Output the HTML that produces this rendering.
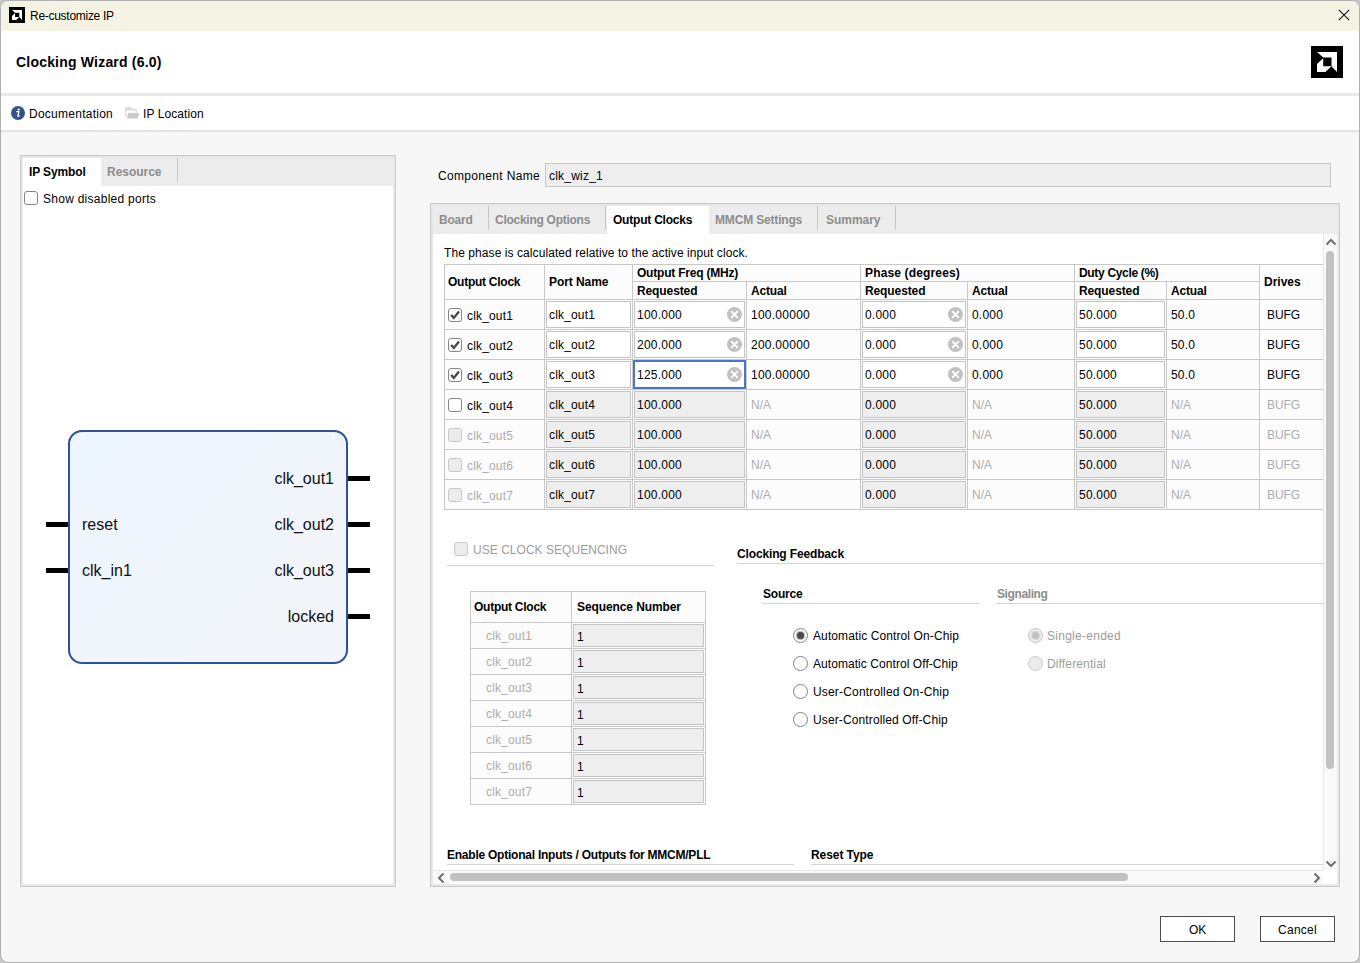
<!DOCTYPE html><html><head><meta charset="utf-8"><title>Re-customize IP</title><style>
*{box-sizing:border-box;margin:0;padding:0}
html,body{width:1360px;height:963px;overflow:hidden;background:#c8c8c8;font-family:"Liberation Sans",sans-serif;font-size:12px;color:#000}
.abs{position:absolute}
.t{position:absolute;white-space:nowrap;line-height:14px;height:14px;letter-spacing:0.2px}
.b{font-weight:bold}
.g{color:#adadad}
.dg{color:#8c8c8c}
.lg{color:#9c9c9c}
.ln{position:absolute;background:#c9c9c9}
.inp{position:absolute;border:1px solid #c4c4c4;background:#fff}
.inp.dis{background:#eeeeee}
.cb{position:absolute;width:14px;height:14px;border:1px solid #868686;border-radius:3px;background:#fff}
.cb.dis{border-color:#c9c9c9;background:#ececec}
.rd{position:absolute;width:15px;height:15px;border:1.3px solid #838383;border-radius:50%;background:#fff}
.rd.dis{border-color:#c8c8c8;background:#ececec}
</style></head><body>
<div class="abs" style="left:0px;top:0px;width:1360px;height:963px;background:#f7f7f7;border:1px solid #b0b0b0;border-radius:8px;overflow:hidden"></div>
<div class="abs" style="left:1px;top:1px;width:1358px;height:30px;background:#f5f4e4;border-radius:7px 7px 0 0"></div>
<svg class="abs" style="left:9px;top:7px" width="16" height="16" viewBox="0 0 32 32"><rect width="32" height="32" fill="#000"/><polygon points="6,6 26,6 26,26 20.5,20.2 20.5,11.5 12.2,11.5" fill="#fff"/><polygon points="6,18 12.2,12.2 12.2,20.2 20.5,20.2 14.4,26 6,26" fill="#fff"/></svg>
<div class="t " style="left:30px;top:9px;letter-spacing:-0.28px">Re-customize IP</div>
<svg class="abs" style="left:1338px;top:9px" width="12" height="12" viewBox="0 0 12 12"><path d="M0.8,0.8 L11.2,11.2 M11.2,0.8 L0.8,11.2" stroke="#111" stroke-width="1.1" fill="none"/></svg>
<div class="abs" style="left:1px;top:31px;width:1358px;height:62px;background:#fff"></div>
<div class="t b" style="left:16px;top:54px;font-size:14px;line-height:16px;height:16px;letter-spacing:0.2px">Clocking Wizard (6.0)</div>
<svg class="abs" style="left:1311px;top:46px" width="32" height="32" viewBox="0 0 32 32"><rect width="32" height="32" fill="#000"/><polygon points="6,6 26,6 26,26 20.5,20.2 20.5,11.5 12.2,11.5" fill="#fff"/><polygon points="6,18 12.2,12.2 12.2,20.2 20.5,20.2 14.4,26 6,26" fill="#fff"/></svg>
<div class="abs" style="left:1px;top:93px;width:1358px;height:3px;background:#e8e8e8"></div>
<div class="abs" style="left:1px;top:96px;width:1358px;height:34px;background:#fff"></div>
<div class="abs" style="left:1px;top:130px;width:1358px;height:2px;background:#e3e3e3"></div>
<svg class="abs" style="left:11px;top:106px" width="14" height="14" viewBox="0 0 14 14"><circle cx="7" cy="7" r="7" fill="#35528c"/><circle cx="7.7" cy="3.5" r="1.05" fill="#fff"/><path d="M5.9,5.7 L7.9,5.4 L6.9,10.1 Q6.9,10.7 8.1,10.0" stroke="#fff" stroke-width="1.35" fill="none" stroke-linejoin="round" stroke-linecap="round"/></svg>
<div class="t " style="left:29px;top:107px;letter-spacing:0.253px;">Documentation</div>
<svg class="abs" style="left:125px;top:106px" width="15" height="14" viewBox="0 0 15 14"><path d="M0.2,1.6 Q0.2,1 0.8,1 H6.2 Q6.8,1 6.8,1.6 V2.8 H11.2 Q11.8,2.8 11.8,3.4 V7 H10.7 V4.6 H1.5 V10.2 L0.2,11.6 Z" fill="#dcdcdc"/><path d="M3.5,7 H13.9 Q14.2,7 14.1,7.4 L13,12.3 Q12.9,12.6 12.5,12.6 H2.1 Q1.8,12.6 1.9,12.2 L3.1,7.4 Q3.2,7 3.5,7 Z" fill="#cbcbcb"/></svg>
<div class="t " style="left:143px;top:107px;letter-spacing:0.087px;">IP Location</div>
<div class="abs" style="left:20px;top:155px;width:376px;height:732px;background:#fff;border:1px solid #c9c9c9"></div>
<div class="abs" style="left:21px;top:156px;width:374px;height:730px;border:2px solid #e8e8e8"></div>
<div class="abs" style="left:23px;top:158px;width:370px;height:28px;background:#ececec"></div>
<div class="abs" style="left:23px;top:158px;width:78px;height:28px;background:#fff"></div>
<div class="t b" style="left:29px;top:165px;letter-spacing:-0.113px;">IP Symbol</div>
<div class="t b dg" style="left:107px;top:165px;letter-spacing:-0.031px;">Resource</div>
<div class="ln" style="left:177px;top:158px;width:1px;height:24px;background:#c6c6c6;"></div>
<div class="cb" style="left:24px;top:191px;border-color:#858585"></div>
<div class="t " style="left:43px;top:192px;letter-spacing:0.260px;">Show disabled ports</div>
<div class="abs" style="left:68px;top:430px;width:280px;height:234px;border:2px solid #2e5299;border-radius:14px;background:linear-gradient(135deg,#edf5fe,#f3f5f9)"></div>
<div class="abs" style="left:348px;top:476px;width:22px;height:5px;background:#000"></div>
<div class="abs" style="left:348px;top:522px;width:22px;height:5px;background:#000"></div>
<div class="abs" style="left:348px;top:568px;width:22px;height:5px;background:#000"></div>
<div class="abs" style="left:348px;top:614px;width:22px;height:5px;background:#000"></div>
<div class="abs" style="left:46px;top:522px;width:22px;height:5px;background:#000"></div>
<div class="abs" style="left:46px;top:568px;width:22px;height:5px;background:#000"></div>
<div class="t" style="left:82px;top:516px;font-size:16px;line-height:18px;height:18px;letter-spacing:0;color:#111;">reset</div>
<div class="t" style="left:82px;top:562px;font-size:16px;line-height:18px;height:18px;letter-spacing:0;color:#111;">clk_in1</div>
<div class="t" style="right:1026px;top:470px;font-size:16px;line-height:18px;height:18px;letter-spacing:0;color:#111;">clk_out1</div>
<div class="t" style="right:1026px;top:516px;font-size:16px;line-height:18px;height:18px;letter-spacing:0;color:#111;">clk_out2</div>
<div class="t" style="right:1026px;top:562px;font-size:16px;line-height:18px;height:18px;letter-spacing:0;color:#111;">clk_out3</div>
<div class="t" style="right:1026px;top:608px;font-size:16px;line-height:18px;height:18px;letter-spacing:0;color:#111;">locked</div>
<div class="t " style="left:438px;top:169px;letter-spacing:0.330px;">Component Name</div>
<div class="inp dis" style="left:545px;top:163px;width:786px;height:24px;border-color:#c6c6c6"></div>
<div class="t " style="left:549px;top:169px;letter-spacing:0.220px;">clk_wiz_1</div>
<div class="abs" style="left:430px;top:203px;width:910px;height:684px;background:#fff;border:1px solid #c9c9c9"></div>
<div class="abs" style="left:431px;top:204px;width:908px;height:682px;border:2px solid #e8e8e8"></div>
<div class="abs" style="left:433px;top:206px;width:904px;height:28px;background:#ececec"></div>
<div class="abs" style="left:607px;top:206px;width:102px;height:28px;background:#fff"></div>
<div class="t b dg" style="left:439px;top:213px;letter-spacing:-0.204px;">Board</div>
<div class="ln" style="left:488px;top:206px;width:1px;height:24px;background:#c6c6c6;"></div>
<div class="t b dg" style="left:495px;top:213px;letter-spacing:-0.269px;">Clocking Options</div>
<div class="ln" style="left:605px;top:206px;width:1px;height:24px;background:#c6c6c6;"></div>
<div class="t b" style="left:613px;top:213px;letter-spacing:-0.216px;">Output Clocks</div>
<div class="t b dg" style="left:715px;top:213px;letter-spacing:-0.170px;">MMCM Settings</div>
<div class="ln" style="left:817px;top:206px;width:1px;height:24px;background:#c6c6c6;"></div>
<div class="t b dg" style="left:826px;top:213px;letter-spacing:-0.036px;">Summary</div>
<div class="ln" style="left:895px;top:206px;width:1px;height:24px;background:#c6c6c6;"></div>
<div class="t " style="left:444px;top:246px;letter-spacing:0.076px;">The phase is calculated relative to the active input clock.</div>
<div class="abs" style="left:444px;top:264px;width:879px;height:246px;background:#fcfcfc"></div>
<div class="ln" style="left:444px;top:264px;width:879px;height:1px;"></div>
<div class="ln" style="left:632px;top:281px;width:627px;height:1px;"></div>
<div class="ln" style="left:444px;top:299px;width:879px;height:1px;"></div>
<div class="ln" style="left:444px;top:329px;width:879px;height:1px;"></div>
<div class="ln" style="left:444px;top:359px;width:879px;height:1px;"></div>
<div class="ln" style="left:444px;top:389px;width:879px;height:1px;"></div>
<div class="ln" style="left:444px;top:419px;width:879px;height:1px;"></div>
<div class="ln" style="left:444px;top:449px;width:879px;height:1px;"></div>
<div class="ln" style="left:444px;top:479px;width:879px;height:1px;"></div>
<div class="ln" style="left:444px;top:509px;width:879px;height:1px;"></div>
<div class="ln" style="left:444px;top:264px;width:1px;height:246px;"></div>
<div class="ln" style="left:544px;top:264px;width:1px;height:246px;"></div>
<div class="ln" style="left:632px;top:264px;width:1px;height:246px;"></div>
<div class="ln" style="left:746px;top:281px;width:1px;height:229px;"></div>
<div class="ln" style="left:860px;top:264px;width:1px;height:246px;"></div>
<div class="ln" style="left:967px;top:281px;width:1px;height:229px;"></div>
<div class="ln" style="left:1074px;top:264px;width:1px;height:246px;"></div>
<div class="ln" style="left:1166px;top:281px;width:1px;height:229px;"></div>
<div class="ln" style="left:1259px;top:264px;width:1px;height:246px;"></div>
<div class="t b" style="left:448px;top:275px;letter-spacing:-0.256px;">Output Clock</div>
<div class="t b" style="left:549px;top:275px;letter-spacing:-0.070px;">Port Name</div>
<div class="t b" style="left:637px;top:266px;letter-spacing:-0.216px;">Output Freq (MHz)</div>
<div class="t b" style="left:865px;top:266px;letter-spacing:0.153px;">Phase (degrees)</div>
<div class="t b" style="left:1079px;top:266px;letter-spacing:-0.323px;">Duty Cycle (%)</div>
<div class="t b" style="left:637px;top:284px;letter-spacing:-0.108px;">Requested</div>
<div class="t b" style="left:751px;top:284px;letter-spacing:-0.174px;">Actual</div>
<div class="t b" style="left:865px;top:284px;letter-spacing:-0.108px;">Requested</div>
<div class="t b" style="left:972px;top:284px;letter-spacing:-0.174px;">Actual</div>
<div class="t b" style="left:1079px;top:284px;letter-spacing:-0.108px;">Requested</div>
<div class="t b" style="left:1171px;top:284px;letter-spacing:-0.174px;">Actual</div>
<div class="t b" style="left:1264px;top:275px;letter-spacing:-0.012px;">Drives</div>
<div class="cb" style="left:448px;top:308px"><svg width="12" height="12" viewBox="0 0 12 12" style="position:absolute;left:0;top:0"><path d="M2.2,6.0 L4.8,8.9 L10,2.6" stroke="#4a4a4a" stroke-width="2.4" fill="none"/></svg></div>
<div class="t " style="left:467px;top:309px;letter-spacing:0.163px;">clk_out1</div>
<div class="inp" style="left:546px;top:301px;width:85px;height:27px"></div>
<div class="t " style="left:549px;top:308px;letter-spacing:0.163px;">clk_out1</div>
<div class="inp" style="left:634px;top:301px;width:111px;height:27px"></div>
<div class="t " style="left:637px;top:308px;letter-spacing:0.232px;">100.000</div>
<div class="abs" style="left:727px;top:307px;width:15px;height:15px"><svg width="15" height="15" viewBox="0 0 15 15"><circle cx="7.5" cy="7.5" r="7.5" fill="#c1c1c1"/><path d="M4.2,4.2 L10.8,10.8 M10.8,4.2 L4.2,10.8" stroke="#fff" stroke-width="1.9" fill="none"/></svg></div>
<div class="t " style="left:751px;top:308px;letter-spacing:0.253px;">100.00000</div>
<div class="inp" style="left:862px;top:301px;width:104px;height:27px"></div>
<div class="t " style="left:865px;top:308px;letter-spacing:0.194px;">0.000</div>
<div class="abs" style="left:948px;top:307px;width:15px;height:15px"><svg width="15" height="15" viewBox="0 0 15 15"><circle cx="7.5" cy="7.5" r="7.5" fill="#c1c1c1"/><path d="M4.2,4.2 L10.8,10.8 M10.8,4.2 L4.2,10.8" stroke="#fff" stroke-width="1.9" fill="none"/></svg></div>
<div class="t " style="left:972px;top:308px;letter-spacing:0.194px;">0.000</div>
<div class="inp" style="left:1076px;top:301px;width:89px;height:27px"></div>
<div class="t " style="left:1079px;top:308px;letter-spacing:0.216px;">50.000</div>
<div class="t " style="left:1171px;top:308px;letter-spacing:0.161px;">50.0</div>
<div class="t " style="left:1267px;top:308px;letter-spacing:-0.083px;">BUFG</div>
<div class="cb" style="left:448px;top:338px"><svg width="12" height="12" viewBox="0 0 12 12" style="position:absolute;left:0;top:0"><path d="M2.2,6.0 L4.8,8.9 L10,2.6" stroke="#4a4a4a" stroke-width="2.4" fill="none"/></svg></div>
<div class="t " style="left:467px;top:339px;letter-spacing:0.163px;">clk_out2</div>
<div class="inp" style="left:546px;top:331px;width:85px;height:27px"></div>
<div class="t " style="left:549px;top:338px;letter-spacing:0.163px;">clk_out2</div>
<div class="inp" style="left:634px;top:331px;width:111px;height:27px"></div>
<div class="t " style="left:637px;top:338px;letter-spacing:0.232px;">200.000</div>
<div class="abs" style="left:727px;top:337px;width:15px;height:15px"><svg width="15" height="15" viewBox="0 0 15 15"><circle cx="7.5" cy="7.5" r="7.5" fill="#c1c1c1"/><path d="M4.2,4.2 L10.8,10.8 M10.8,4.2 L4.2,10.8" stroke="#fff" stroke-width="1.9" fill="none"/></svg></div>
<div class="t " style="left:751px;top:338px;letter-spacing:0.253px;">200.00000</div>
<div class="inp" style="left:862px;top:331px;width:104px;height:27px"></div>
<div class="t " style="left:865px;top:338px;letter-spacing:0.194px;">0.000</div>
<div class="abs" style="left:948px;top:337px;width:15px;height:15px"><svg width="15" height="15" viewBox="0 0 15 15"><circle cx="7.5" cy="7.5" r="7.5" fill="#c1c1c1"/><path d="M4.2,4.2 L10.8,10.8 M10.8,4.2 L4.2,10.8" stroke="#fff" stroke-width="1.9" fill="none"/></svg></div>
<div class="t " style="left:972px;top:338px;letter-spacing:0.194px;">0.000</div>
<div class="inp" style="left:1076px;top:331px;width:89px;height:27px"></div>
<div class="t " style="left:1079px;top:338px;letter-spacing:0.216px;">50.000</div>
<div class="t " style="left:1171px;top:338px;letter-spacing:0.161px;">50.0</div>
<div class="t " style="left:1267px;top:338px;letter-spacing:-0.083px;">BUFG</div>
<div class="cb" style="left:448px;top:368px"><svg width="12" height="12" viewBox="0 0 12 12" style="position:absolute;left:0;top:0"><path d="M2.2,6.0 L4.8,8.9 L10,2.6" stroke="#4a4a4a" stroke-width="2.4" fill="none"/></svg></div>
<div class="t " style="left:467px;top:369px;letter-spacing:0.163px;">clk_out3</div>
<div class="inp" style="left:546px;top:361px;width:85px;height:27px"></div>
<div class="t " style="left:549px;top:368px;letter-spacing:0.163px;">clk_out3</div>
<div class="inp" style="left:633px;top:360px;width:113px;height:29px;border:2px solid #4a76c8"></div>
<div class="t " style="left:637px;top:368px;letter-spacing:0.232px;">125.000</div>
<div class="abs" style="left:727px;top:367px;width:15px;height:15px"><svg width="15" height="15" viewBox="0 0 15 15"><circle cx="7.5" cy="7.5" r="7.5" fill="#c1c1c1"/><path d="M4.2,4.2 L10.8,10.8 M10.8,4.2 L4.2,10.8" stroke="#fff" stroke-width="1.9" fill="none"/></svg></div>
<div class="t " style="left:751px;top:368px;letter-spacing:0.253px;">100.00000</div>
<div class="inp" style="left:862px;top:361px;width:104px;height:27px"></div>
<div class="t " style="left:865px;top:368px;letter-spacing:0.194px;">0.000</div>
<div class="abs" style="left:948px;top:367px;width:15px;height:15px"><svg width="15" height="15" viewBox="0 0 15 15"><circle cx="7.5" cy="7.5" r="7.5" fill="#c1c1c1"/><path d="M4.2,4.2 L10.8,10.8 M10.8,4.2 L4.2,10.8" stroke="#fff" stroke-width="1.9" fill="none"/></svg></div>
<div class="t " style="left:972px;top:368px;letter-spacing:0.194px;">0.000</div>
<div class="inp" style="left:1076px;top:361px;width:89px;height:27px"></div>
<div class="t " style="left:1079px;top:368px;letter-spacing:0.216px;">50.000</div>
<div class="t " style="left:1171px;top:368px;letter-spacing:0.161px;">50.0</div>
<div class="t " style="left:1267px;top:368px;letter-spacing:-0.083px;">BUFG</div>
<div class="cb" style="left:448px;top:398px"></div>
<div class="t " style="left:467px;top:399px;letter-spacing:0.163px;">clk_out4</div>
<div class="inp dis" style="left:546px;top:391px;width:85px;height:27px"></div>
<div class="t " style="left:549px;top:398px;letter-spacing:0.163px;">clk_out4</div>
<div class="inp dis" style="left:634px;top:391px;width:111px;height:27px"></div>
<div class="t " style="left:637px;top:398px;letter-spacing:0.232px;">100.000</div>
<div class="t g" style="left:751px;top:398px;letter-spacing:-0.001px;">N/A</div>
<div class="inp dis" style="left:862px;top:391px;width:104px;height:27px"></div>
<div class="t " style="left:865px;top:398px;letter-spacing:0.194px;">0.000</div>
<div class="t g" style="left:972px;top:398px;letter-spacing:-0.001px;">N/A</div>
<div class="inp dis" style="left:1076px;top:391px;width:89px;height:27px"></div>
<div class="t " style="left:1079px;top:398px;letter-spacing:0.216px;">50.000</div>
<div class="t g" style="left:1171px;top:398px;letter-spacing:-0.001px;">N/A</div>
<div class="t g" style="left:1267px;top:398px;letter-spacing:-0.083px;">BUFG</div>
<div class="cb dis" style="left:448px;top:428px"></div>
<div class="t g" style="left:467px;top:429px;letter-spacing:0.163px;">clk_out5</div>
<div class="inp dis" style="left:546px;top:421px;width:85px;height:27px"></div>
<div class="t " style="left:549px;top:428px;letter-spacing:0.163px;">clk_out5</div>
<div class="inp dis" style="left:634px;top:421px;width:111px;height:27px"></div>
<div class="t " style="left:637px;top:428px;letter-spacing:0.232px;">100.000</div>
<div class="t g" style="left:751px;top:428px;letter-spacing:-0.001px;">N/A</div>
<div class="inp dis" style="left:862px;top:421px;width:104px;height:27px"></div>
<div class="t " style="left:865px;top:428px;letter-spacing:0.194px;">0.000</div>
<div class="t g" style="left:972px;top:428px;letter-spacing:-0.001px;">N/A</div>
<div class="inp dis" style="left:1076px;top:421px;width:89px;height:27px"></div>
<div class="t " style="left:1079px;top:428px;letter-spacing:0.216px;">50.000</div>
<div class="t g" style="left:1171px;top:428px;letter-spacing:-0.001px;">N/A</div>
<div class="t g" style="left:1267px;top:428px;letter-spacing:-0.083px;">BUFG</div>
<div class="cb dis" style="left:448px;top:458px"></div>
<div class="t g" style="left:467px;top:459px;letter-spacing:0.163px;">clk_out6</div>
<div class="inp dis" style="left:546px;top:451px;width:85px;height:27px"></div>
<div class="t " style="left:549px;top:458px;letter-spacing:0.163px;">clk_out6</div>
<div class="inp dis" style="left:634px;top:451px;width:111px;height:27px"></div>
<div class="t " style="left:637px;top:458px;letter-spacing:0.232px;">100.000</div>
<div class="t g" style="left:751px;top:458px;letter-spacing:-0.001px;">N/A</div>
<div class="inp dis" style="left:862px;top:451px;width:104px;height:27px"></div>
<div class="t " style="left:865px;top:458px;letter-spacing:0.194px;">0.000</div>
<div class="t g" style="left:972px;top:458px;letter-spacing:-0.001px;">N/A</div>
<div class="inp dis" style="left:1076px;top:451px;width:89px;height:27px"></div>
<div class="t " style="left:1079px;top:458px;letter-spacing:0.216px;">50.000</div>
<div class="t g" style="left:1171px;top:458px;letter-spacing:-0.001px;">N/A</div>
<div class="t g" style="left:1267px;top:458px;letter-spacing:-0.083px;">BUFG</div>
<div class="cb dis" style="left:448px;top:488px"></div>
<div class="t g" style="left:467px;top:489px;letter-spacing:0.163px;">clk_out7</div>
<div class="inp dis" style="left:546px;top:481px;width:85px;height:27px"></div>
<div class="t " style="left:549px;top:488px;letter-spacing:0.163px;">clk_out7</div>
<div class="inp dis" style="left:634px;top:481px;width:111px;height:27px"></div>
<div class="t " style="left:637px;top:488px;letter-spacing:0.232px;">100.000</div>
<div class="t g" style="left:751px;top:488px;letter-spacing:-0.001px;">N/A</div>
<div class="inp dis" style="left:862px;top:481px;width:104px;height:27px"></div>
<div class="t " style="left:865px;top:488px;letter-spacing:0.194px;">0.000</div>
<div class="t g" style="left:972px;top:488px;letter-spacing:-0.001px;">N/A</div>
<div class="inp dis" style="left:1076px;top:481px;width:89px;height:27px"></div>
<div class="t " style="left:1079px;top:488px;letter-spacing:0.216px;">50.000</div>
<div class="t g" style="left:1171px;top:488px;letter-spacing:-0.001px;">N/A</div>
<div class="t g" style="left:1267px;top:488px;letter-spacing:-0.083px;">BUFG</div>
<div class="cb dis" style="left:454px;top:542px"></div>
<div class="t lg" style="left:473px;top:543px;letter-spacing:0.032px;">USE CLOCK SEQUENCING</div>
<div class="ln" style="left:447px;top:565px;width:267px;height:1px;background:#d4d4d4;"></div>
<div class="abs" style="left:470px;top:591px;width:236px;height:214px;background:#fcfcfc"></div>
<div class="ln" style="left:470px;top:591px;width:236px;height:1px;"></div>
<div class="ln" style="left:470px;top:622px;width:236px;height:1px;"></div>
<div class="ln" style="left:470px;top:804px;width:236px;height:1px;"></div>
<div class="ln" style="left:470px;top:591px;width:1px;height:214px;"></div>
<div class="ln" style="left:571px;top:591px;width:1px;height:214px;"></div>
<div class="ln" style="left:705px;top:591px;width:1px;height:214px;"></div>
<div class="ln" style="left:470px;top:648px;width:236px;height:1px;"></div>
<div class="ln" style="left:470px;top:674px;width:236px;height:1px;"></div>
<div class="ln" style="left:470px;top:700px;width:236px;height:1px;"></div>
<div class="ln" style="left:470px;top:726px;width:236px;height:1px;"></div>
<div class="ln" style="left:470px;top:752px;width:236px;height:1px;"></div>
<div class="ln" style="left:470px;top:778px;width:236px;height:1px;"></div>
<div class="t b" style="left:474px;top:600px;letter-spacing:-0.256px;">Output Clock</div>
<div class="t b" style="left:577px;top:600px;letter-spacing:-0.095px;">Sequence Number</div>
<div class="t g" style="left:486px;top:629px;letter-spacing:0.163px;">clk_out1</div>
<div class="inp dis" style="left:573px;top:624px;width:131px;height:23px"></div>
<div class="t " style="left:577px;top:630px;letter-spacing:0.326px;">1</div>
<div class="t g" style="left:486px;top:655px;letter-spacing:0.163px;">clk_out2</div>
<div class="inp dis" style="left:573px;top:650px;width:131px;height:23px"></div>
<div class="t " style="left:577px;top:656px;letter-spacing:0.326px;">1</div>
<div class="t g" style="left:486px;top:681px;letter-spacing:0.163px;">clk_out3</div>
<div class="inp dis" style="left:573px;top:676px;width:131px;height:23px"></div>
<div class="t " style="left:577px;top:682px;letter-spacing:0.326px;">1</div>
<div class="t g" style="left:486px;top:707px;letter-spacing:0.163px;">clk_out4</div>
<div class="inp dis" style="left:573px;top:702px;width:131px;height:23px"></div>
<div class="t " style="left:577px;top:708px;letter-spacing:0.326px;">1</div>
<div class="t g" style="left:486px;top:733px;letter-spacing:0.163px;">clk_out5</div>
<div class="inp dis" style="left:573px;top:728px;width:131px;height:23px"></div>
<div class="t " style="left:577px;top:734px;letter-spacing:0.326px;">1</div>
<div class="t g" style="left:486px;top:759px;letter-spacing:0.163px;">clk_out6</div>
<div class="inp dis" style="left:573px;top:754px;width:131px;height:23px"></div>
<div class="t " style="left:577px;top:760px;letter-spacing:0.326px;">1</div>
<div class="t g" style="left:486px;top:785px;letter-spacing:0.163px;">clk_out7</div>
<div class="inp dis" style="left:573px;top:780px;width:131px;height:23px"></div>
<div class="t " style="left:577px;top:786px;letter-spacing:0.326px;">1</div>
<div class="t b" style="left:737px;top:547px;letter-spacing:-0.144px;">Clocking Feedback</div>
<div class="ln" style="left:737px;top:563px;width:586px;height:1px;background:#d4d4d4;"></div>
<div class="t b" style="left:763px;top:587px;letter-spacing:-0.182px;">Source</div>
<div class="ln" style="left:762px;top:603px;width:217px;height:1px;background:#d4d4d4;"></div>
<div class="t b dg" style="left:997px;top:587px;letter-spacing:-0.391px;">Signaling</div>
<div class="ln" style="left:996px;top:603px;width:327px;height:1px;background:#d4d4d4;"></div>
<div class="rd" style="left:793px;top:627.5px"><div style="position:absolute;left:3px;top:3px;width:7px;height:7px;border-radius:50%;background:#4a4a4a;box-shadow:0 0 1px 1px rgba(74,74,74,.45)"></div></div>
<div class="t " style="left:813px;top:629px;letter-spacing:0.104px;">Automatic Control On-Chip</div>
<div class="rd" style="left:793px;top:655.5px"></div>
<div class="t " style="left:813px;top:657px;letter-spacing:0.062px;">Automatic Control Off-Chip</div>
<div class="rd" style="left:793px;top:683.5px"></div>
<div class="t " style="left:813px;top:685px;letter-spacing:0.172px;">User-Controlled On-Chip</div>
<div class="rd" style="left:793px;top:711.5px"></div>
<div class="t " style="left:813px;top:713px;letter-spacing:0.123px;">User-Controlled Off-Chip</div>
<div class="rd dis" style="left:1027.5px;top:627.5px"><div style="position:absolute;left:3px;top:3px;width:7px;height:7px;border-radius:50%;background:#c2c2c2;box-shadow:0 0 1px 1px rgba(194,194,194,.45)"></div></div>
<div class="t lg" style="left:1047px;top:629px;letter-spacing:0.273px;">Single-ended</div>
<div class="rd dis" style="left:1027.5px;top:655.5px"></div>
<div class="t lg" style="left:1047px;top:657px;letter-spacing:0.137px;">Differential</div>
<div class="t b" style="left:447px;top:848px;letter-spacing:-0.237px;">Enable Optional Inputs / Outputs for MMCM/PLL</div>
<div class="ln" style="left:447px;top:864px;width:347px;height:1px;background:#d4d4d4;"></div>
<div class="t b" style="left:811px;top:848px;letter-spacing:-0.068px;">Reset Type</div>
<div class="ln" style="left:811px;top:864px;width:512px;height:1px;background:#d4d4d4;"></div>
<div class="abs" style="left:1323px;top:234px;width:14px;height:637px;background:#fafafa;border-left:1px solid #e8e8e8"></div>
<svg class="abs" style="left:1325px;top:238px" width="12" height="8" viewBox="0 0 12 8"><path d="M1.5,6.5 L6,2 L10.5,6.5" stroke="#6e6e6e" stroke-width="2" fill="none"/></svg>
<svg class="abs" style="left:1325px;top:860px" width="12" height="8" viewBox="0 0 12 8"><path d="M1.5,1.5 L6,6 L10.5,1.5" stroke="#6e6e6e" stroke-width="2" fill="none"/></svg>
<div class="abs" style="left:1326px;top:251px;width:8px;height:518px;background:#c1c1c1;border-radius:4px"></div>
<div class="abs" style="left:433px;top:870px;width:891px;height:14px;background:#fafafa;border-top:1px solid #e8e8e8"></div>
<div class="abs" style="left:1323px;top:870px;width:14px;height:14px;background:#fff"></div>
<svg class="abs" style="left:437px;top:872px" width="8" height="12" viewBox="0 0 8 12"><path d="M6.5,1.5 L2,6 L6.5,10.5" stroke="#6e6e6e" stroke-width="2" fill="none"/></svg>
<svg class="abs" style="left:1313px;top:872px" width="8" height="12" viewBox="0 0 8 12"><path d="M1.5,1.5 L6,6 L1.5,10.5" stroke="#6e6e6e" stroke-width="2" fill="none"/></svg>
<div class="abs" style="left:450px;top:873px;width:678px;height:8px;background:#c1c1c1;border-radius:4px"></div>
<div class="abs" style="left:1160px;top:916px;width:75px;height:26px;border:1px solid #4d4d4d;background:#fff"></div>
<div class="t " style="left:1189px;top:923px;letter-spacing:-0.169px;">OK</div>
<div class="abs" style="left:1260px;top:916px;width:75px;height:26px;border:1px solid #4d4d4d;background:#fff"></div>
<div class="t " style="left:1278px;top:923px;letter-spacing:0.274px;">Cancel</div>
</body></html>
